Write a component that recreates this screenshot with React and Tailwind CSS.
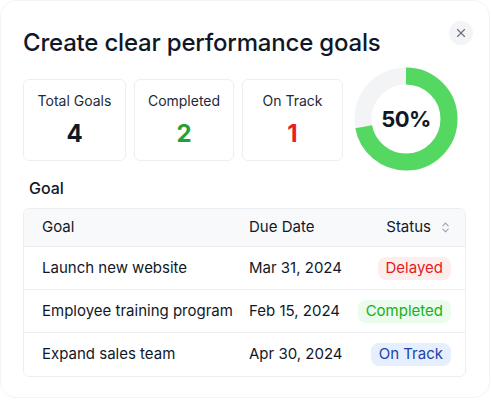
import React from 'react';
import { X, ChevronsUpDown } from 'lucide-react';

const stats = [
  { label: 'Total Goals', value: '4', color: 'text-gray-900', w: 'w-[103px]' },
  { label: 'Completed', value: '2', color: 'text-[#1fa336]', w: 'w-[100px]' },
  { label: 'On Track', value: '1', color: 'text-[#ec1c24]', w: 'w-[101px]' },
];

const rows = [
  { goal: 'Launch new website', due: 'Mar 31, 2024', status: 'Delayed', badge: 'bg-[#fdeeee] text-[#e61b1b]' },
  { goal: 'Employee training program', due: 'Feb 15, 2024', status: 'Completed', badge: 'bg-[#ebfbec] text-[#17b020]' },
  { goal: 'Expand sales team', due: 'Apr 30, 2024', status: 'On Track', badge: 'bg-[#e5effd] text-[#1f3fa8]' },
];

const Donut = ({ pct }) => {
  const r = 43;
  const c = 2 * Math.PI * r;
  return (
    <div className="relative w-[104px] h-[104px]">
      <svg width="104" height="104" viewBox="0 0 104 104">
        <circle cx="52" cy="52" r={r} fill="none" stroke="#f3f4f6" strokeWidth="17" />
        <circle
          cx="52" cy="52" r={r} fill="none" stroke="#55d862" strokeWidth="17"
          strokeDasharray={`${c * pct} ${c}`} transform="rotate(-90 52 52)"
        />
      </svg>
      <div className="absolute inset-0 flex items-center justify-center text-[22px] font-bold text-gray-900 tracking-tight">
        50%
      </div>
    </div>
  );
};

export default function App() {
  return (
    <div className="w-[491px] h-[400px] bg-white" style={{ fontFamily: 'Inter, "Noto Sans", sans-serif' }}>
      <div className="w-[490px] h-[398px] rounded-2xl border border-gray-100 bg-white pl-[22px] pr-[23px] pt-[26px] relative">
        <button className="absolute right-[16px] top-[20px] w-6 h-6 rounded-full bg-gray-100 flex items-center justify-center text-gray-500">
          <X size={14} strokeWidth={2} />
        </button>
        <h1 className="text-[24px] leading-8 font-medium text-gray-900 tracking-[-0.2px]">Create clear performance goals</h1>

        <div className="flex items-center mt-[9px]">
          <div className="flex gap-2">
            {stats.map((s) => (
              <div key={s.label} className={`${s.w} h-[82px] rounded-md border border-gray-200/70 flex flex-col items-center pt-[11px]`}>
                <div className="text-[14px] text-gray-800 leading-5">{s.label}</div>
                <div className={`text-[24px] font-bold leading-8 mt-[7px] ${s.color}`}>{s.value}</div>
              </div>
            ))}
          </div>
          <div className="ml-[11px] -mt-[1px]">
            <Donut pct={0.72} />
          </div>
        </div>

        <div className="text-[16px] font-medium text-gray-900 ml-[6px] mt-[5px] leading-6">Goal</div>

        <div className="mt-[8px] rounded-md border border-gray-200/70 overflow-hidden text-[15px] text-gray-900">
          <div className="flex items-center h-[38px] bg-[#f8f9fb] border-b border-gray-200/70 pl-[18px] pr-[13px]">
            <div className="w-[207px]">Goal</div>
            <div className="flex-1">Due Date</div>
            <div className="flex items-center gap-[8px]">
              Status
              <ChevronsUpDown size={13} className="text-gray-400" />
            </div>
          </div>
          {rows.map((r, i) => (
            <div key={r.goal} className={`flex items-center h-[43px] pl-[18px] pr-[14px] ${i < rows.length - 1 ? 'border-b border-gray-200/70' : ''}`}>
              <div className="w-[207px] whitespace-nowrap">{r.goal}</div>
              <div className="flex-1 whitespace-nowrap">{r.due}</div>
              <span className={`px-[8px] h-[23px] flex items-center rounded-lg ${r.badge}`}>{r.status}</span>
            </div>
          ))}
        </div>
      </div>
    </div>
  );
}
